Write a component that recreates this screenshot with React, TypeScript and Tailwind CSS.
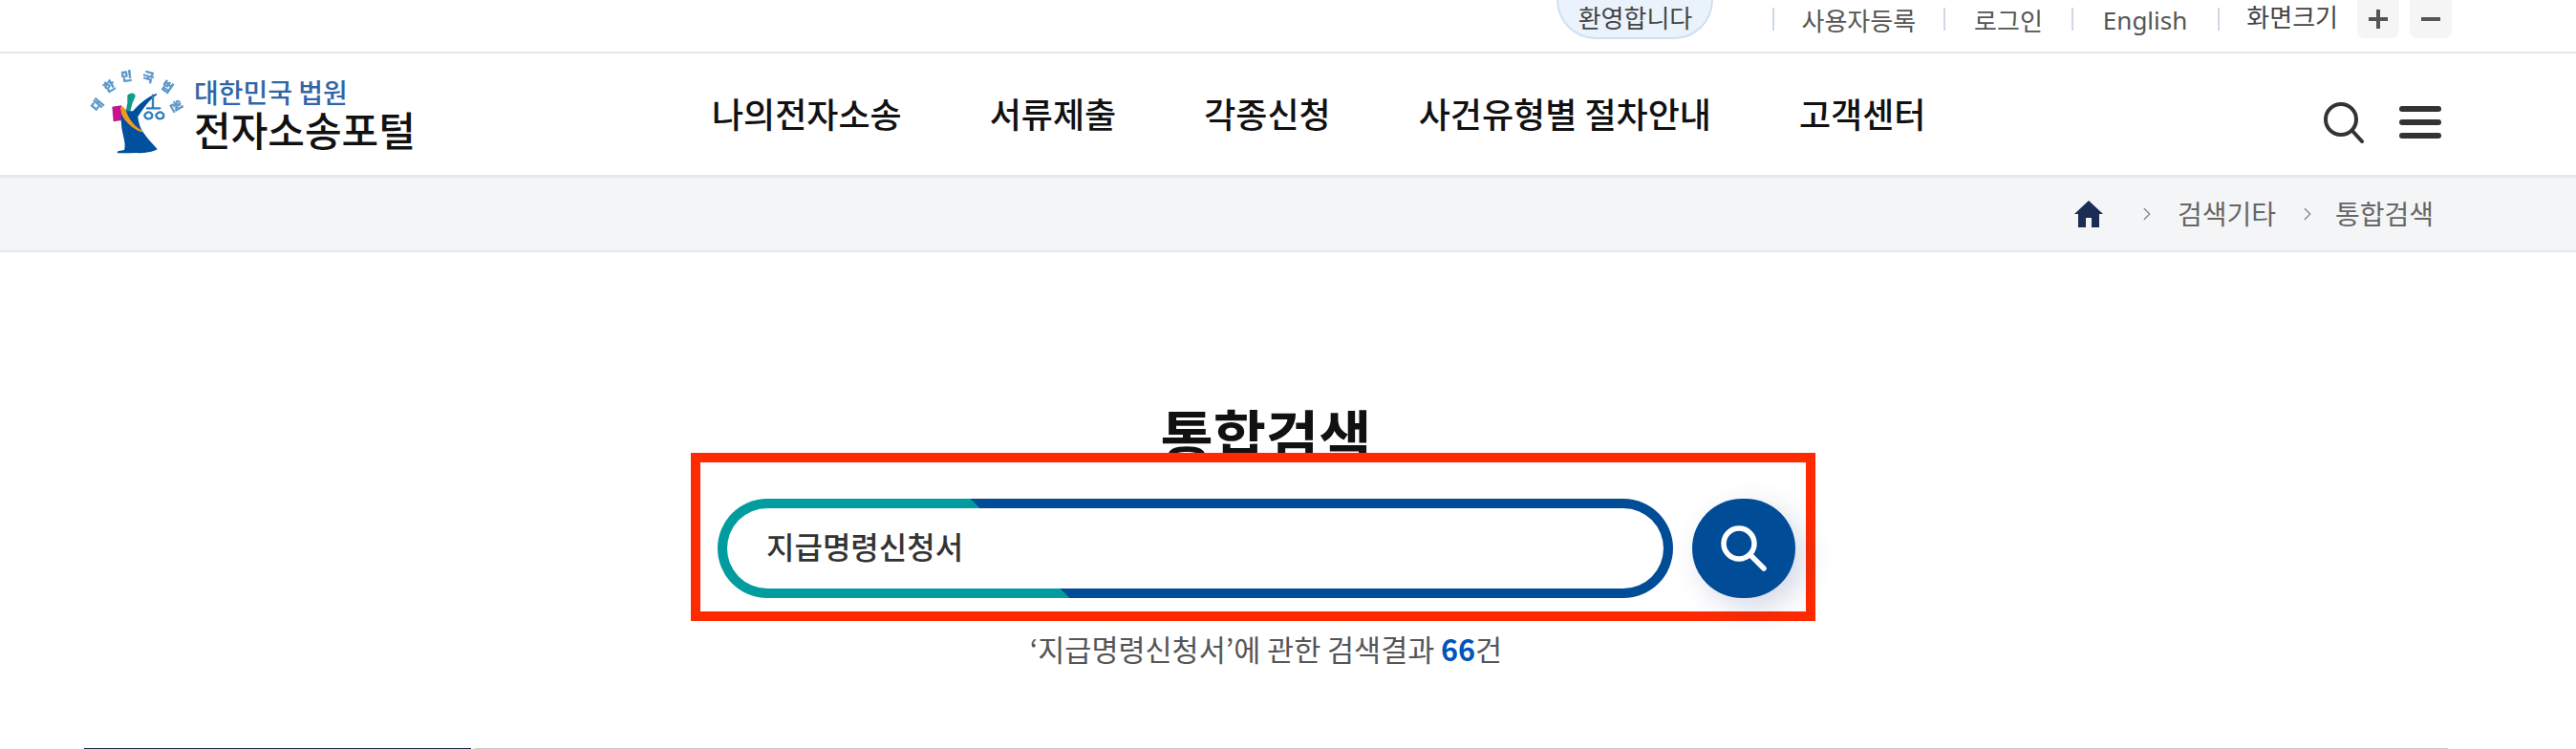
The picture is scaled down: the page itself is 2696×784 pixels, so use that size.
import { ChevronRight } from "lucide-react";

const font = "font-['Noto_Sans_CJK_KR','Noto_Sans',sans-serif]";
const navItems = ["나의전자소송", "서류제출", "각종신청", "사건유형별 절차안내", "고객센터"];

function Sep() {
  return <span className="w-[2px] h-[24px] bg-[#cfd9e6] mt-[8px]" />;
}

function CourtLogo() {
  const letters: [string, number, number, number][] = [
    ["대", 68, 155, -50],
    ["한", 105, 97, -30],
    ["민", 157, 66, -6],
    ["국", 225, 68, 15],
    ["법", 283, 98, 35],
    ["원", 310, 158, 60],
  ];
  return (
    <svg width="130" height="110" viewBox="0 0 390 330" className="blur-[0.6px] shrink-0">
      {letters.map(([ch, x, y, r]) => (
        <text
          key={ch}
          x={x}
          y={y}
          fontSize="38"
          fontWeight="700"
          fill="#5b97cb"
          stroke="#5b97cb"
          strokeWidth="2"
          textAnchor="middle"
          dominantBaseline="middle"
          transform={`rotate(${r} ${x} ${y})`}
        >
          {ch}
        </text>
      ))}
      <path d="M112 158 L142 154 L146 200 L116 205 Z" fill="#c4168c" />
      <path d="M160 122 C170 112 186 114 185 126 L176 146 L168 176 L154 178 L160 146 Z" fill="#0f9c8c" />
      <path d="M172 178 C195 150 222 128 252 116 L252 121 C228 138 212 160 194 188 Z" fill="#00509d" />
      <path
        d="M142 165 C150 164 156 166 158 172 L192 172 C192 195 196 215 205 232 C222 258 240 275 254 292 C236 302 205 305 190 303 L168 304 L128 304 L130 298 L150 294 C155 280 150 262 146 245 C140 220 138 190 142 165 Z"
        fill="#00509d"
      />
      <path d="M138 160 C146 156 152 160 156 172 C164 198 184 222 208 234 L204 238 C174 226 152 204 142 182 Z" fill="#f39a1e" />
      <g fill="none" stroke="#2f7fb8" strokeWidth="7" strokeLinecap="round">
        <path d="M240 122 V162 M222 163 H262" />
        <path d="M214 184 C216 200 238 200 238 184 C232 172 222 172 214 184" />
        <path d="M250 184 C252 200 274 200 274 184 C268 172 258 172 250 184" />
      </g>
    </svg>
  );
}

export default function App() {
  return (
    <div className={`${font} w-[2696px] h-[784px] overflow-hidden bg-white text-[#111]`}>
      <div className="h-[56px] border-b-2 border-[#e3e8ee] flex justify-end pr-[130px] text-[26px] leading-[36px] text-[#555]">
        <div className="flex items-start">
          <span className="w-[164px] h-[41px] rounded-b-full border-2 border-t-0 bg-[#eaf2fb] border-[#cfe0f2] text-center text-[#444] leading-[36px] mr-[62px]">
            환영합니다
          </span>
          <Sep />
          <span className="mt-[3px] ml-[28px] mr-[29px]">사용자등록</span>
          <Sep />
          <span className="mt-[3px] ml-[30px] mr-[30px]">로그인</span>
          <Sep />
          <span className="mt-[3px] ml-[31px] mr-[32px] font-['Noto_Sans',sans-serif]">English</span>
          <Sep />
          <span className="-mt-[1px] ml-[28px] mr-[20px] text-[#444]">화면크기</span>
          <span className="w-[44px] h-[40px] bg-[#f5f5f5] rounded-b-lg flex items-center justify-center mr-[11px]">
            <svg width="22" height="22" viewBox="0 0 22 22" fill="none" stroke="#555" strokeWidth="4">
              <path d="M11 1 V21 M1 11 H21" />
            </svg>
          </span>
          <span className="w-[44px] h-[40px] bg-[#f5f5f5] rounded-b-lg flex items-center justify-center">
            <svg width="22" height="22" viewBox="0 0 22 22" fill="none" stroke="#555" strokeWidth="4">
              <path d="M1 11 H21" />
            </svg>
          </span>
        </div>
      </div>

      <div className="h-[130px] border-b-[3px] border-[#e4e7ef] flex items-center">
        <div className="w-[745px] pl-[80px] flex items-center shrink-0">
          <div className="-mt-[12px]">
            <CourtLogo />
          </div>
          <div className="-ml-[7px] flex flex-col">
            <span className="text-[28px] leading-[30px] font-medium text-[#2f66a8]">대한민국 법원</span>
            <span className="text-[42px] leading-[48px] font-medium text-[#111]">전자소송포털</span>
          </div>
        </div>
        <nav className="flex gap-[92px] text-[36px] font-medium text-[#111] -mt-[3px] whitespace-nowrap">
          {navItems.map((item) => (
            <span key={item}>{item}</span>
          ))}
        </nav>
        <div className="ml-auto pr-[141px] mt-[16px] flex items-center gap-[36px]">
          <svg width="44" height="44" viewBox="0 0 44 44" fill="none" stroke="#333" strokeWidth="4" strokeLinecap="round">
            <circle cx="19" cy="19" r="16" />
            <path d="M31 31 L41 42" />
          </svg>
          <div className="w-[44px] h-[34px] flex flex-col justify-between">
            <span className="h-[6px] bg-[#333] rounded-sm" />
            <span className="h-[6px] bg-[#333] rounded-sm" />
            <span className="h-[6px] bg-[#333] rounded-sm" />
          </div>
        </div>
      </div>

      <div className="h-[78px] bg-[#f4f5f7] border-b-2 border-[#e3e8ee] flex items-center justify-end pr-[149px] text-[28px] text-[#666]">
        <svg width="30" height="28" viewBox="0 0 30 28" fill="#1b2c55">
          <path d="M15 0 L30 14 H26 V28 H18 V18 H12 V28 H4 V14 H0 Z" />
        </svg>
        <ChevronRight size={22} strokeWidth={1.5} color="#888" className="ml-[35px] mr-[21px]" />
        <span className="-mt-[2px]">검색기타</span>
        <ChevronRight size={22} strokeWidth={1.5} color="#888" className="ml-[22px] mr-[18px]" />
        <span className="-mt-[2px]">통합검색</span>
      </div>

      <main className="pr-[134px] pl-[88px]">
        <h1 className="pt-[146px] h-[210px] text-center text-[60px] leading-[88px] font-bold text-[#111]">통합검색</h1>
        <div className="relative z-10 ml-[635px] w-[1177px] h-[176px] border-[10px] border-[#ff2a00] bg-white pt-[38px] pl-[18px] flex gap-[20px]">
          <div className="w-[1000px] h-[104px] rounded-full p-[10px] bg-[linear-gradient(45deg,#009c9f_33.4%,#004c97_33.4%)]">
            <div className="h-full rounded-full bg-white flex items-center pl-[41px] pb-[6px] text-[32px] font-medium text-[#333]">
              지급명령신청서
            </div>
          </div>
          <button className="w-[108px] h-[104px] rounded-full bg-[#004c97] shadow-[10px_10px_30px_rgba(40,60,130,0.2)] flex items-center justify-center">
            <svg width="56" height="56" viewBox="0 0 56 56" fill="none" stroke="#fff" strokeWidth="5.5" strokeLinecap="round">
              <circle cx="23" cy="23" r="16" />
              <path d="M35 35 L49 49" />
            </svg>
          </button>
        </div>
        <p className="mt-[7px] text-center text-[30.5px] leading-[44px] text-[#555]">
          ‘지급명령신청서’에 관한 검색결과 <b className="text-[#0056b8]">66</b>건
        </p>
      </main>

      <div className="mt-[82px] mx-[88px] w-[2474px] flex gap-[4px]">
        <span className="w-[405px] h-[3px] bg-[#1b2a4a]" />
        <span className="flex-1 h-[3px] bg-[#c8c8c8]" />
      </div>
    </div>
  );
}
